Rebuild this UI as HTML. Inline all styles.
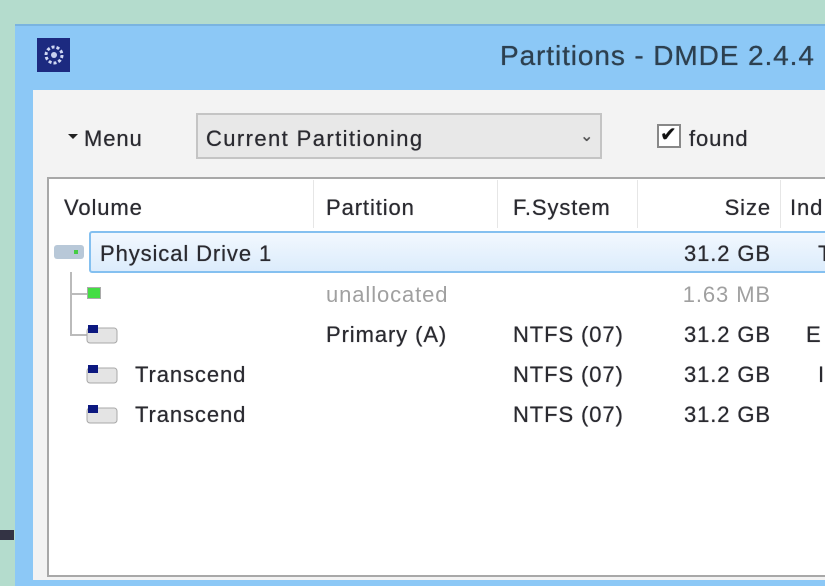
<!DOCTYPE html>
<html><head><style>
body{margin:0;width:825px;height:575px;overflow:hidden;background:#b4dccd;font-family:"Liberation Sans",sans-serif;position:relative}
.a{position:absolute}
.t{position:absolute;font-size:22px;color:#2a2a30;white-space:nowrap;letter-spacing:0.9px;text-shadow:0 0 0.6px #2a2a30}
.r{right:54px;text-align:right}
.g{color:#a0a0a0;text-shadow:none}
</style></head><body>
<div class="a" style="left:15px;top:24px;width:830px;height:560px;background:#8cc8f6;border-top:2px solid #7ab4e0"></div>
<div class="a" style="left:37px;top:38px;width:33px;height:34px;background:#1c2a80"></div>
<svg class="a" style="left:39px;top:42px" width="30" height="26"><g fill="#c8d0f0"><circle cx="15" cy="13" r="8" fill="none" stroke="#d0d8f4" stroke-width="3" stroke-dasharray="3 2"/><circle cx="15" cy="13" r="3"/></g></svg>
<div class="t" style="left:500px;top:40px;font-size:28px;color:#2c4050;letter-spacing:0.9px">Partitions - DMDE 2.4.4</div>
<div class="a" style="left:33px;top:90px;width:800px;height:490px;background:#f3f3f3"></div>
<div class="a" style="left:68px;top:134px;width:0;height:0;border-left:5px solid transparent;border-right:5px solid transparent;border-top:5px solid #222"></div>
<div class="t" style="left:84px;top:126px">Menu</div>
<div class="a" style="left:196px;top:113px;width:406px;height:46px;background:#e8e8e8;border:2px solid #c4c4c4;box-sizing:border-box"></div>
<div class="t" style="left:206px;top:126px;letter-spacing:1.4px">Current Partitioning</div>
<div class="t" style="left:580px;top:126px;font-size:16px;color:#555">&#8964;</div>
<div class="a" style="left:657px;top:124px;width:24px;height:24px;background:#fff;border:2px solid #888;box-sizing:border-box"></div>
<div class="t" style="left:660px;top:122px;font-size:20px;color:#111;letter-spacing:0">✔</div>
<div class="t" style="left:689px;top:126px">found</div>
<div class="a" style="left:47px;top:177px;width:800px;height:400px;background:#fff;border:2px solid #a8a8a8;box-sizing:border-box"></div>
<div class="a" style="left:313px;top:180px;width:1px;height:48px;background:#e6e6e6"></div>
<div class="a" style="left:497px;top:180px;width:1px;height:48px;background:#e6e6e6"></div>
<div class="a" style="left:637px;top:180px;width:1px;height:48px;background:#e6e6e6"></div>
<div class="a" style="left:780px;top:180px;width:1px;height:48px;background:#e6e6e6"></div>
<div class="t" style="left:64px;top:195px">Volume</div>
<div class="t" style="left:326px;top:195px">Partition</div>
<div class="t" style="left:513px;top:195px">F.System</div>
<div class="t r" style="top:195px">Size</div>
<div class="t" style="left:790px;top:195px">Ind</div>
<div class="a" style="left:89px;top:231px;width:740px;height:42px;border:2px solid #84c0f0;box-sizing:border-box;background:linear-gradient(#f2f8fe,#dcecfc);border-radius:3px"></div>
<div class="a" style="left:54px;top:245px;width:30px;height:14px;background:#b8c8d8;border-radius:3px"></div>
<div class="a" style="left:74px;top:250px;width:4px;height:4px;background:#4c4"></div>
<div class="t" style="left:100px;top:241px">Physical Drive 1</div>
<div class="t r" style="top:241px">31.2 GB</div>
<div class="t" style="left:818px;top:241px">T</div>
<div class="a" style="left:70px;top:272px;width:2px;height:64px;background:#bbb"></div>
<div class="a" style="left:70px;top:293px;width:18px;height:2px;background:#bbb"></div>
<div class="a" style="left:70px;top:334px;width:18px;height:2px;background:#bbb"></div>
<div class="a" style="left:87px;top:287px;width:12px;height:10px;background:#44dd44;border:1px solid #aaa"></div>
<div class="t g" style="left:326px;top:282px">unallocated</div>
<div class="t g r" style="top:282px">1.63 MB</div>
<svg class="a" style="left:86px;top:323px" width="36" height="22"><rect x="1" y="5" width="30" height="15" rx="3" fill="#e4e4e4" stroke="#a8a8a8"/><rect x="2" y="2" width="10" height="8" fill="#0c1880"/></svg>
<div class="t" style="left:326px;top:322px">Primary (A)</div>
<div class="t" style="left:513px;top:322px">NTFS (07)</div>
<div class="t r" style="top:322px">31.2 GB</div>
<div class="t" style="left:806px;top:322px">E</div>
<svg class="a" style="left:86px;top:363px" width="36" height="22"><rect x="1" y="5" width="30" height="15" rx="3" fill="#e4e4e4" stroke="#a8a8a8"/><rect x="2" y="2" width="10" height="8" fill="#0c1880"/></svg>
<div class="t" style="left:135px;top:362px">Transcend</div>
<div class="t" style="left:513px;top:362px">NTFS (07)</div>
<div class="t r" style="top:362px">31.2 GB</div>
<div class="t" style="left:818px;top:362px">I</div>
<svg class="a" style="left:86px;top:403px" width="36" height="22"><rect x="1" y="5" width="30" height="15" rx="3" fill="#e4e4e4" stroke="#a8a8a8"/><rect x="2" y="2" width="10" height="8" fill="#0c1880"/></svg>
<div class="t" style="left:135px;top:402px">Transcend</div>
<div class="t" style="left:513px;top:402px">NTFS (07)</div>
<div class="t r" style="top:402px">31.2 GB</div>
<div class="a" style="left:0;top:530px;width:14px;height:10px;background:#334"></div>
</body></html>
